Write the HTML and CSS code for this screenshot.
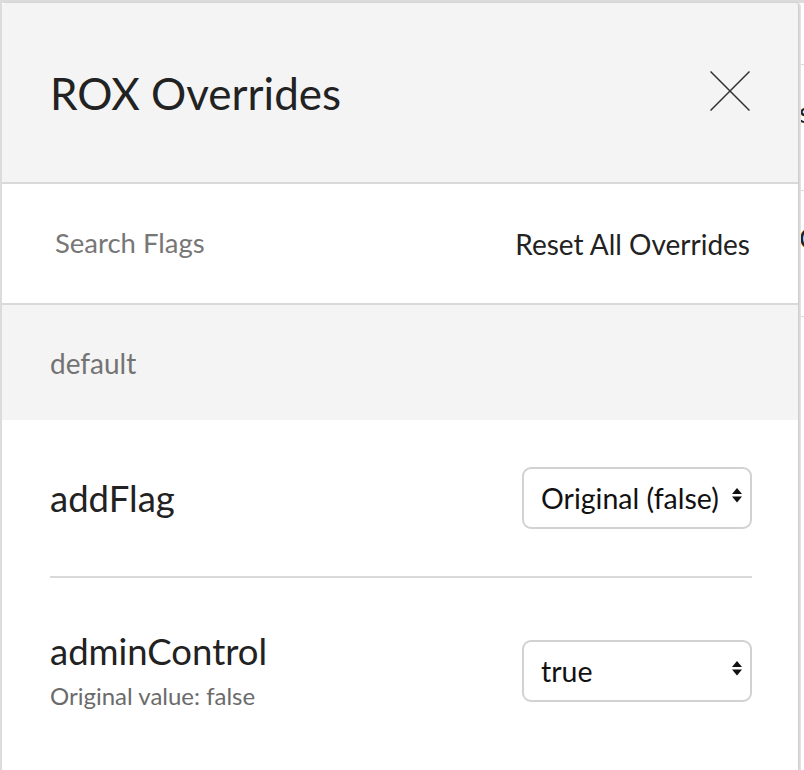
FILE: index.html
```html
<!DOCTYPE html>
<html>
<head>
<meta charset="utf-8">
<link rel="stylesheet" href="styles.css">
</head>
<body>
<div class="backdrop">
  <div class="bg-row bg-row-first"><span class="bg-text">s</span></div>
  <div class="bg-row"><span class="bg-text">C</span></div>
  <div class="bg-row"></div>
</div>
<div class="modal">
  <header class="modal-header">
    <h1 class="modal-title">ROX Overrides</h1>
    <button class="close-btn" aria-label="Close">
      <svg width="40" height="40" viewBox="0 0 40 40"><path d="M0.5 0.5 L39.5 39.5 M39.5 0.5 L0.5 39.5" stroke="#333" stroke-width="1.5" fill="none"/></svg>
    </button>
  </header>
  <div class="search-row">
    <input class="search-input" type="text" placeholder="Search Flags">
    <button class="reset-btn">Reset All Overrides</button>
  </div>
  <div class="namespace">default</div>
  <div class="flags">
    <div class="flag-row">
      <div class="flag-info">
        <div class="flag-name">addFlag</div>
      </div>
      <div class="select-wrap">
        <select class="flag-select">
          <option>Original (false)</option>
          <option>true</option>
          <option>false</option>
        </select>
        <svg class="select-arrows" width="10" height="15" viewBox="0 0 10 15"><path d="M5 0 L10 6 L0 6 Z M0 8.5 L10 8.5 L5 14.5 Z" fill="#111"/></svg>
      </div>
    </div>
    <div class="flag-row">
      <div class="flag-info flag-info-tall">
        <div class="flag-name">adminControl</div>
        <div class="flag-original">Original value: false</div>
      </div>
      <div class="select-wrap">
        <select class="flag-select">
          <option>true</option>
          <option>Original (false)</option>
          <option>false</option>
        </select>
        <svg class="select-arrows" width="10" height="15" viewBox="0 0 10 15"><path d="M5 0 L10 6 L0 6 Z M0 8.5 L10 8.5 L5 14.5 Z" fill="#111"/></svg>
      </div>
    </div>
  </div>
</div>
</body>
</html>
```
FILE: styles.css
```css
* { box-sizing: border-box; }
html, body {
  margin: 0;
  padding: 0;
  width: 804px;
  height: 770px;
  overflow: hidden;
  background: #ffffff;
  font-family: "Lato", "Open Sans", sans-serif;
}
.backdrop {
  position: absolute;
  top: 0;
  left: 0;
  width: 804px;
  height: 770px;
  background: #ffffff;
  border-left: 2px solid #dcdcdc;
  border-top: 3px solid #dcdcdc;
  padding-top: 61px;
  padding-left: 798px;
}
.bg-row {
  height: 126px;
  border-top: 1px solid #dadada;
  font-size: 28px;
  color: #222;
  padding-top: 30px;
}
.bg-text { margin-left: -1px; }
.modal {
  position: absolute;
  top: 3px;
  left: 2px;
  width: 796px;
  height: 767px;
  background: #ffffff;
  border-radius: 4px 4px 0 0;
  box-shadow: 1px 0 2px rgba(0,0,0,0.12), 3px 0 0 #e2e2e2;
  display: flex;
  flex-direction: column;
}
.modal-header {
  height: 181px;
  flex-shrink: 0;
  background: #f4f4f4;
  border-bottom: 2px solid #d9d9d9;
  border-radius: 4px 4px 0 0;
  display: flex;
  align-items: center;
  justify-content: space-between;
  padding: 0 48px 0 48px;
}
.modal-title {
  margin: 0;
  font-size: 44px;
  font-weight: 400;
  color: #222;
}
.close-btn {
  background: none;
  border: 0;
  padding: 0;
  width: 40px;
  height: 40px;
  cursor: pointer;
  margin-top: -4px;
}
.close-btn svg { display: block; }
.search-row {
  height: 121px;
  flex-shrink: 0;
  border-bottom: 2px solid #d9d9d9;
  display: flex;
  align-items: center;
  justify-content: space-between;
  padding: 0 48px 0 53px;
}
.search-input {
  border: 0;
  outline: none;
  font-family: inherit;
  font-size: 27.5px;
  color: #222;
  padding: 0;
  width: 300px;
  margin-top: -3px;
  background: transparent;
}
.search-input::placeholder { color: #777; }
.reset-btn {
  background: none;
  border: 0;
  padding: 0;
  font-family: inherit;
  font-size: 28px;
  color: #222;
  cursor: pointer;
  margin-top: 1px;
}
.namespace {
  height: 115px;
  flex-shrink: 0;
  background: #f4f4f4;
  display: flex;
  align-items: center;
  padding: 0 48px;
  font-size: 28px;
  color: #737373;
}
.flags {
  padding: 0 46px 0 48px;
}
.flag-row {
  padding: 47px 0;
  display: flex;
  align-items: center;
  justify-content: space-between;
}
.flag-row + .flag-row {
  border-top: 2px solid #d9d9d9;
}
.flag-info-tall {
  padding: 4px 0 7px;
}
.flag-name {
  font-size: 36.5px;
  line-height: 44px;
  color: #222;
}
.flag-original {
  font-size: 24px;
  line-height: 29px;
  color: #6b6b6b;
  margin-top: 8px;
}
.select-wrap {
  position: relative;
  width: 230px;
  height: 62px;
}
.flag-select {
  appearance: none;
  -webkit-appearance: none;
  width: 100%;
  height: 100%;
  border: 2px solid #d2d2d2;
  border-radius: 9px;
  background: #fff;
  font-family: inherit;
  font-size: 28.5px;
  color: #111;
  padding: 0 30px 0 17px;
  outline: none;
}
.select-arrows {
  position: absolute;
  right: 10px;
  top: 21px;
  pointer-events: none;
}
```
